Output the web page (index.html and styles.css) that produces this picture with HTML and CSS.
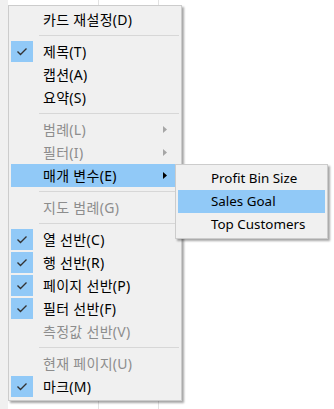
FILE: index.html
```html
<!DOCTYPE html>
<html lang="ko">
<head>
<meta charset="utf-8">
<link rel="stylesheet" href="styles.css">
</head>
<body>
<div class="menu">
  <div class="item"><span class="chk"></span><span class="label">카드 재설정(D)</span></div>
  <div class="sep"></div>
  <div class="item checked"><span class="chk"><svg width="22" height="21" viewBox="0 0 22 21"><path d="M6.5 10.5 L9.5 13.5 L15.5 7.5" fill="none" stroke="#333" stroke-width="1.4"/></svg></span><span class="label">제목(T)</span></div>
  <div class="item"><span class="chk"></span><span class="label">캡션(A)</span></div>
  <div class="item"><span class="chk"></span><span class="label">요약(S)</span></div>
  <div class="sep"></div>
  <div class="item disabled"><span class="chk"></span><span class="label">범례(L)</span><svg class="arrow" width="5" height="7" viewBox="0 0 5 7"><path d="M0 0 L4 3.5 L0 7Z"/></svg></div>
  <div class="item disabled"><span class="chk"></span><span class="label">필터(I)</span><svg class="arrow" width="5" height="7" viewBox="0 0 5 7"><path d="M0 0 L4 3.5 L0 7Z"/></svg></div>
  <div class="item hl open"><span class="chk"></span><span class="label">매개 변수(E)</span><svg class="arrow" width="5" height="7" viewBox="0 0 5 7"><path d="M0 0 L4 3.5 L0 7Z"/></svg>
    <div class="sub">
      <div class="sitem">Profit Bin Size</div>
      <div class="sitem hl">Sales Goal</div>
      <div class="sitem">Top Customers</div>
    </div>
  </div>
  <div class="sep"></div>
  <div class="item disabled"><span class="chk"></span><span class="label">지도 범례(G)</span></div>
  <div class="sep"></div>
  <div class="item checked"><span class="chk"><svg width="22" height="21" viewBox="0 0 22 21"><path d="M6.5 10.5 L9.5 13.5 L15.5 7.5" fill="none" stroke="#333" stroke-width="1.4"/></svg></span><span class="label">열 선반(C)</span></div>
  <div class="item checked"><span class="chk"><svg width="22" height="21" viewBox="0 0 22 21"><path d="M6.5 10.5 L9.5 13.5 L15.5 7.5" fill="none" stroke="#333" stroke-width="1.4"/></svg></span><span class="label">행 선반(R)</span></div>
  <div class="item checked"><span class="chk"><svg width="22" height="21" viewBox="0 0 22 21"><path d="M6.5 10.5 L9.5 13.5 L15.5 7.5" fill="none" stroke="#333" stroke-width="1.4"/></svg></span><span class="label">페이지 선반(P)</span></div>
  <div class="item checked"><span class="chk"><svg width="22" height="21" viewBox="0 0 22 21"><path d="M6.5 10.5 L9.5 13.5 L15.5 7.5" fill="none" stroke="#333" stroke-width="1.4"/></svg></span><span class="label">필터 선반(F)</span></div>
  <div class="item disabled"><span class="chk"></span><span class="label">측정값 선반(V)</span></div>
  <div class="sep"></div>
  <div class="item disabled"><span class="chk"></span><span class="label">현재 페이지(U)</span></div>
  <div class="item checked"><span class="chk"><svg width="22" height="21" viewBox="0 0 22 21"><path d="M6.5 10.5 L9.5 13.5 L15.5 7.5" fill="none" stroke="#333" stroke-width="1.4"/></svg></span><span class="label">마크(M)</span></div>
</div>
</body>
</html>
```
FILE: styles.css
```css
html, body {
  margin: 0;
  padding: 0;
}
body {
  width: 334px;
  height: 409px;
  overflow: hidden;
  background: linear-gradient(to right, #f0f0f0 0 8px, #ffffff 8px 98px, #e2e2e2 98px 99px, #ffffff 99px 158px, #e2e2e2 158px 159px, #ffffff 159px);
  font-family: "Noto Sans", "Noto Sans CJK KR", sans-serif;
  font-size: 14px;
  color: #000;
}
.menu {
  position: absolute;
  left: 8px;
  top: 5px;
  width: 168px;
  padding: 2px;
  border: 1px solid #cccccc;
  background: #f0f0f0;
  box-shadow: 2px 2px 2px rgba(0, 0, 0, 0.35);
}
.item {
  height: 23px;
  display: flex;
  align-items: center;
  white-space: nowrap;
}
.chk {
  flex: none;
  width: 22px;
  height: 21px;
  margin-right: 10px;
  display: flex;
}
.checked .chk {
  background: #91c9f7;
}
.label {
  flex: 1;
  line-height: 23px;
  letter-spacing: 0.3px;
}
.arrow {
  flex: none;
  margin-right: 11px;
  fill: #000;
}
.disabled {
  color: #8d8d8d;
}
.disabled .arrow {
  fill: #a6a6a6;
}
.hl {
  background: #91c9f7;
}
.sep {
  height: 1px;
  margin: 4px 0 4px 28px;
  background: #d7d7d7;
}
.open {
  position: relative;
}
.sub {
  position: absolute;
  left: 164px;
  top: 0;
  width: 147px;
  padding: 2px;
  border: 1px solid #cccccc;
  background: #f0f0f0;
  box-shadow: 2px 2px 2px rgba(0, 0, 0, 0.35);
  font-size: 13.4px;
}
.sitem {
  height: 23px;
  line-height: 23px;
  padding-left: 33px;
  white-space: nowrap;
  color: #000;
}
```
